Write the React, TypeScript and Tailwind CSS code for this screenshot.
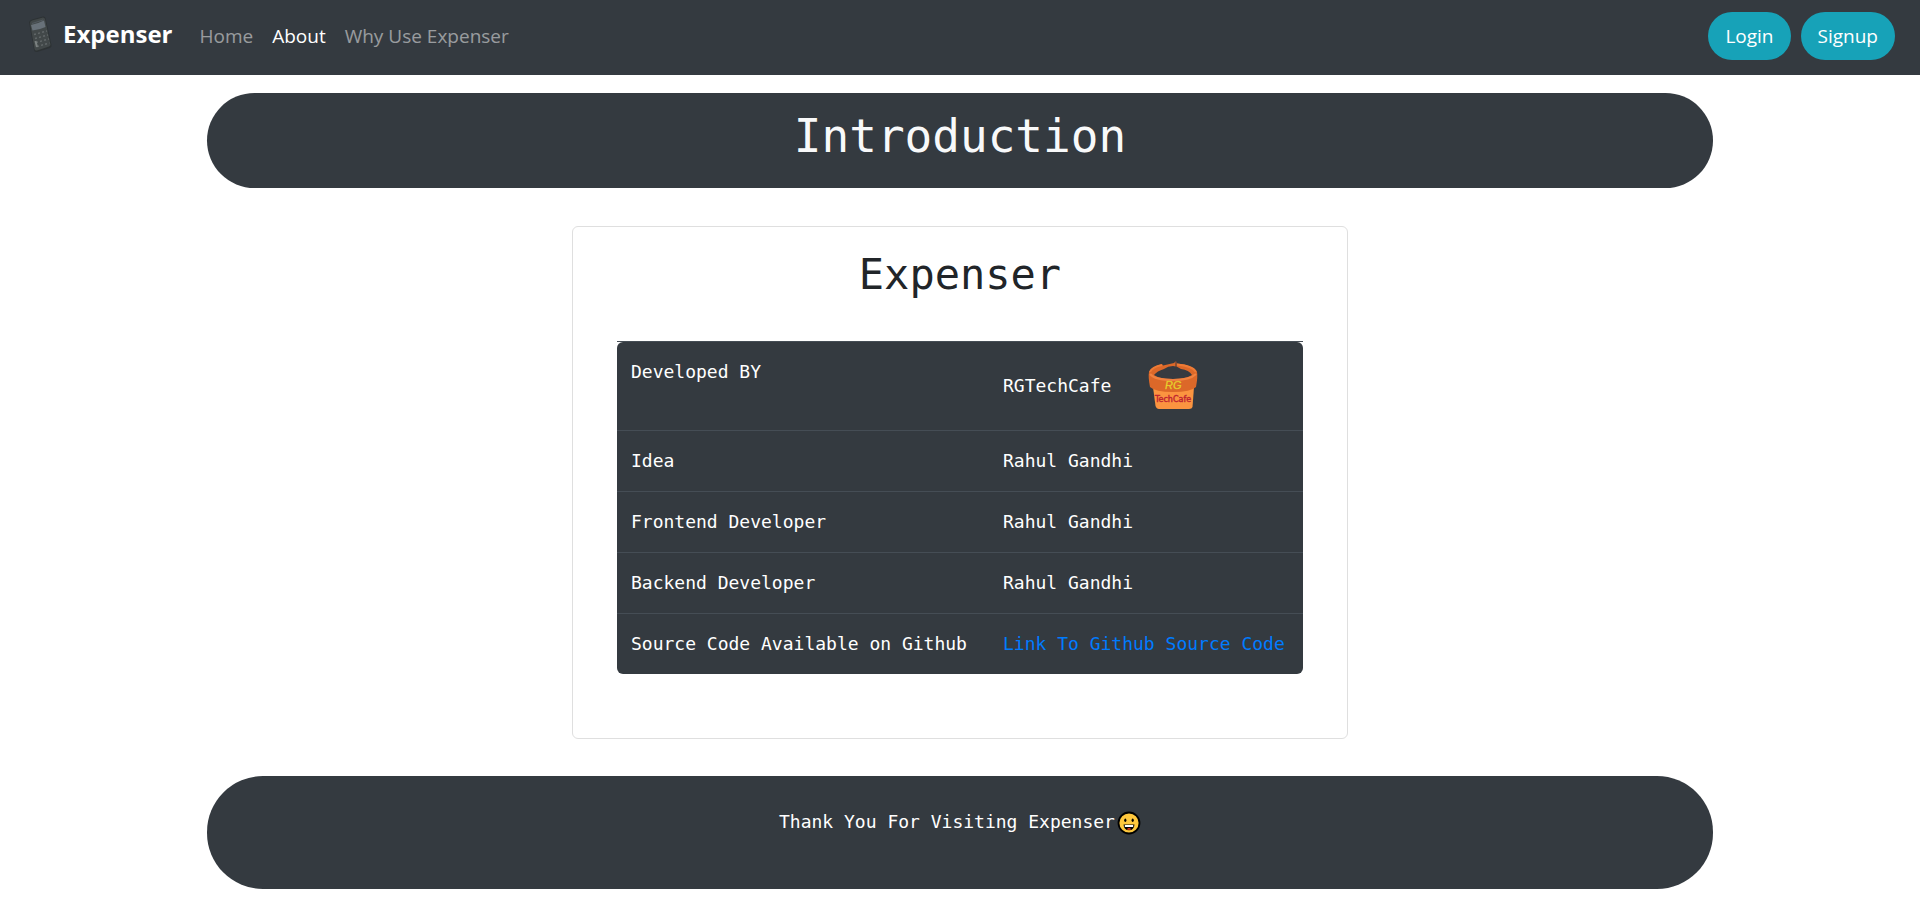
import React from "react";

const people = [
  { role: "Idea", name: "Rahul Gandhi" },
  { role: "Frontend Developer", name: "Rahul Gandhi" },
  { role: "Backend Developer", name: "Rahul Gandhi" },
];

function CalculatorLogo() {
  return (
    <svg width="30" height="44" viewBox="0 0 30 44" aria-hidden="true">
      <path d="M4 8 Q5 6 7 5.500 L18 2.500 Q20 2 20.500 4 L26.500 31 Q27 33 25 34 L12 38 Q9.500 38.500 9 36 Z" fill="#2d3234" />
      <path d="M5 9 Q5 7 7 6.500 L18 3.500 Q19.500 3.500 20 5 L25.500 30.500 Q25.500 32 24 32.500 L12 36.500 Q10 37 9.500 35 Z" fill="#424849" />
      <path d="M6 11 Q12 10 19 6.500 L20.500 13 Q14 16 7.500 16.500 Z" fill="#687179" />
      <path d="M7 9.500 L18 6" stroke="#525a60" strokeWidth="1" />
      <g stroke="#626869" strokeWidth="1.500" strokeDasharray="2 2.200">
        <path d="M9 20.500 L22 17" />
        <path d="M10 24.500 L23 21" />
        <path d="M11 28.500 L24 25" />
        <path d="M12 32.500 L24.500 29" />
      </g>
      <path d="M10.500 27 L12 33" stroke="#7b8181" strokeWidth="2" />
    </svg>
  );
}

function CafeLogo() {
  return (
    <svg width="50" height="50" viewBox="0 0 50 50" role="img" aria-label="RG TechCafe">
      <path d="M5 26 L46 26 L44.500 46 Q44 48 41 48 L11 48 Q8.500 48 7.500 45 Z" fill="#fb9440" />
      <path d="M1 11 Q3 6 14 3 L15 4.500 L26 2 L28 0 L29 2.500 Q45 4 49 11 Q50 15 48 26 Q43 31 25 31 Q7 31 2 26 Q0 16 1 11 Z" fill="#dc6829" />
      <path d="M6 14 Q9 10 16 8 Q20 5 25 5 Q29 5 33 8 Q41 9 44 14 Q38 18 25 18 Q11 18 6 14 Z" fill="#363a40" />
      <path d="M2 13 Q7 19 25 19 Q42 19 48 13" fill="none" stroke="#f08240" strokeWidth="2" />
      <path d="M2 11 Q4 6 14 4 M29 3.500 Q45 5 48 11" fill="none" stroke="#ee7b36" strokeWidth="2" />
      <path d="M28 0 V7" stroke="#42383a" strokeWidth="1" />
      <text x="17" y="28" fontFamily="Liberation Sans" fontSize="11" fontStyle="italic" fill="#f2dc30" stroke="#d9bd28" strokeWidth="0.300">RG</text>
      <text x="7" y="41" fontFamily="DejaVu Sans" fontSize="8" fill="#bf2430" stroke="#bf2430" strokeWidth="0.400">TechCafe</text>
    </svg>
  );
}

function GrinningFace() {
  return (
    <svg className="ml-0.5 inline-block align-middle" width="24" height="24" viewBox="0 0 24 24" role="img" aria-label="Grinning face">
      <circle cx="12" cy="12" r="10.500" fill="#ffc83d" stroke="#000" strokeWidth="1.800" />
      <ellipse cx="8.300" cy="9.300" rx="1.100" ry="1.800" fill="#000" />
      <ellipse cx="15.700" cy="9.300" rx="1.100" ry="1.800" fill="#000" />
      <path d="M6.500 13.500 H17.500 Q17 19.300 12 19.300 Q7 19.300 6.500 13.500 Z" fill="#000" />
      <path d="M7.800 14 H16.200 V16 H7.800 Z" fill="#fff" />
      <path d="M9.800 18.200 Q12 16 14.200 18.200 Q12 19.300 9.800 18.200 Z" fill="#f03a17" />
    </svg>
  );
}

export default function App() {
  return (
    <div className="bg-white font-['DejaVu_Sans_Mono',monospace] text-lg leading-[30px] text-[#212529]">
      <nav className="flex h-[75px] items-center bg-[#343a40] px-[25px] pb-[3px] font-['Open_Sans','Noto_Sans',sans-serif] text-[19px]">
        <a href="#" className="flex items-center gap-2 text-2xl font-bold text-white">
          <CalculatorLogo />
          <span className="pb-1">Expenser</span>
        </a>
        <div className="ml-[27px] flex gap-[19px] text-white/50">
          <a href="#">Home</a>
          <a href="#" className="text-white" aria-current="page">About</a>
          <a href="#">Why Use Expenser</a>
        </div>
        <div className="ml-auto flex gap-[10px] text-white">
          <button type="button" className="h-12 rounded-3xl bg-[#17a2b8] px-[17px]">Login</button>
          <button type="button" className="h-12 rounded-3xl bg-[#17a2b8] px-[17px]">Signup</button>
        </div>
      </nav>

      <main className="mx-auto flex w-[78.4%] flex-col items-center pt-[18px]">
        <h1 className="h-[95px] w-full rounded-[48px] bg-[#343a40] pt-[13px] text-center text-[46px] leading-[60px] text-[#f8f9fa]">
          Introduction
        </h1>

        <section className="mt-[38px] rounded-md border border-[#dfdfdf] px-11 pt-[19px] pb-16">
          <h2 className="text-center text-[42px] leading-[58px]">Expenser</h2>
          <div className="mt-[37px] border-t border-[#454d55]">
            <table className="w-[686px] overflow-hidden rounded-md bg-[#343a40] text-left text-white">
              <tbody>
                <tr className="h-[88px]">
                  <th scope="row" className="w-[371px] px-[14px] pt-[15px] align-top font-normal">Developed BY</th>
                  <td className="px-[15px]">
                    <div className="flex items-center gap-[37px]">
                      RGTechCafe
                      <CafeLogo />
                    </div>
                  </td>
                </tr>
                {people.map((person) => (
                  <tr key={person.role} className="border-t border-[#454d55]">
                    <th scope="row" className="px-[14px] py-[15px] font-normal">{person.role}</th>
                    <td className="p-[15px]">{person.name}</td>
                  </tr>
                ))}
                <tr className="border-t border-[#454d55]">
                  <th scope="row" className="px-[14px] py-[15px] font-normal">Source Code Available on Github</th>
                  <td className="p-[15px]">
                    <a href="#" className="text-[#007bff]">Link To Github Source Code</a>
                  </td>
                </tr>
              </tbody>
            </table>
          </div>
        </section>

        <footer className="mt-[37px] h-[113px] w-full rounded-[56px] bg-[#343a40] pt-[31px] text-center text-white">
          Thank You For Visiting Expenser<GrinningFace />
        </footer>
      </main>
    </div>
  );
}
